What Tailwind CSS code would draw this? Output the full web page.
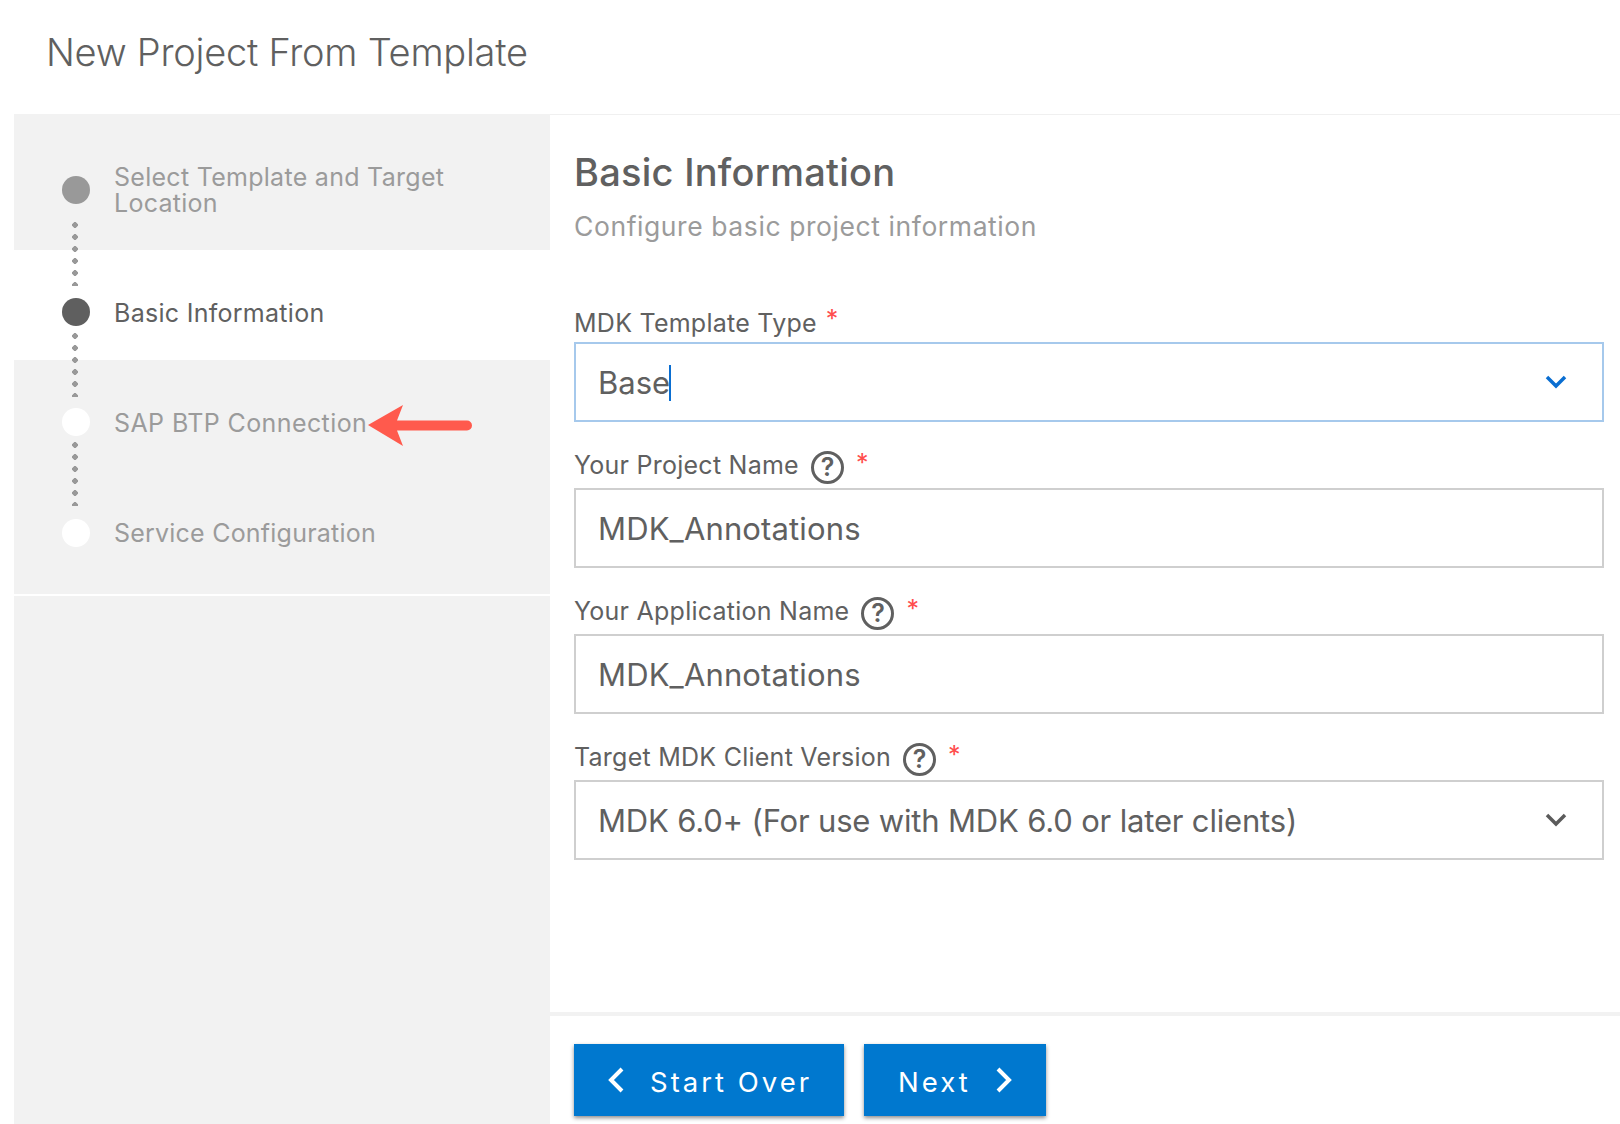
<!DOCTYPE html>
<html lang="en">
  <head>
    <meta charset="UTF-8" />
    <title>New Project From Template</title>
    <script src="https://cdn.jsdelivr.net/npm/@tailwindcss/browser@4"></script>
  </head>
  <body class="bg-white font-['Inter',sans-serif] text-[#606060] w-[1620px] h-[1124px] overflow-hidden">
    <!-- Header -->
    <header class="h-[114px] pl-[46px] pt-[27px]">
      <h1 class="text-[38px] leading-[50px] font-light tracking-[-0.25px]">New Project From Template</h1>
    </header>

    <div class="flex h-[1010px] pl-[14px]">
      <!-- Stepper -->
      <aside class="w-[536px] shrink-0 flex flex-col bg-[#f2f2f2] text-[25px] tracking-[0.28px]">
        <div class="relative h-[136px] pl-[48px] pt-[48px] flex gap-[24px] text-[#9b9b9b]">
          <span class="w-[28px] h-[28px] mt-[14px] rounded-full bg-[#999999] shrink-0"></span>
          <span class="leading-[26px] pt-[2px]">Select Template and Target<br />Location</span>
          <span class="absolute z-10 left-[58px] top-[108px] w-[6px] h-[64px] bg-[radial-gradient(circle_at_3px_3px,#999999_2.6px,transparent_3px)] bg-[length:6px_12px]"></span>
        </div>
        <div class="relative h-[110px] bg-white pl-[48px] pt-[48px] flex gap-[24px]">
          <span class="w-[28px] h-[28px] rounded-full bg-[#5f5f5f] shrink-0"></span>
          <span class="leading-[28px] pt-[1px]">Basic Information</span>
          <span class="absolute z-10 left-[58px] top-[83px] w-[6px] h-[64px] bg-[radial-gradient(circle_at_3px_3px,#999999_2.6px,transparent_3px)] bg-[length:6px_12px]"></span>
        </div>
        <div class="relative h-[234px] pl-[48px] pt-[48px] text-[#9b9b9b]">
          <div class="flex gap-[24px]">
            <span class="w-[28px] h-[28px] rounded-full bg-white shrink-0"></span>
            <span class="leading-[28px] pt-[1px] tracking-[0.4px]">SAP BTP Connection</span>
          </div>
          <div class="flex gap-[24px] mt-[82px]">
            <span class="w-[28px] h-[28px] rounded-full bg-white shrink-0"></span>
            <span class="leading-[28px] tracking-[0.22px]">Service Configuration</span>
          </div>
          <span class="absolute z-10 left-[58px] top-[82px] w-[6px] h-[64px] bg-[radial-gradient(circle_at_3px_3px,#999999_2.6px,transparent_3px)] bg-[length:6px_12px]"></span>
          <!-- Annotation arrow -->
          <svg class="absolute left-[354px] top-[45px]" width="110" height="44" viewBox="0 0 110 44">
            <path d="M0 20 L35 0 L29 15.5 L99 15.5 A5 5 0 0 1 99 25.5 L29 25.5 L35 41 Z" fill="#ff5a4d" />
          </svg>
        </div>
        <div class="h-[2px] bg-white"></div>
      </aside>

      <!-- Main -->
      <main class="flex-1 flex flex-col border-t border-[#f0f0f0]">
        <div class="h-[897px] pl-[24px] pr-[16px] pt-[32px]">
          <h2 class="text-[38px] leading-[50px] font-medium tracking-[0.25px]">Basic Information</h2>
          <p class="mt-[11px] text-[26.5px] leading-[36px] tracking-[0.58px] text-[#9b9b9b]">Configure basic project information</p>

          <form class="mt-[62px] text-[25px] tracking-[0.25px]">
            <label class="flex items-center h-[33px] mb-[3px]">
              <span class="translate-y-[1px]">MDK Template Type</span>
              <span class="ml-[9px] text-[#ff4d4d] -translate-y-[3px]">*</span>
            </label>
            <div class="h-[80px] border-2 border-[#a6c9ec] flex items-center pl-[22px] pr-[34px] pt-[2px] text-[31px] tracking-normal">
              <span>Base</span><span class="w-[2px] h-[36px] bg-[#0a6ed1] -ml-[1px]"></span>
              <svg class="ml-auto -translate-y-[1px]" width="24" height="14" viewBox="0 0 24 14" fill="none" stroke="#0a6ed1" stroke-width="3.5"><path d="M3 2 L12 11 L21 2" /></svg>
            </div>

            <label class="flex items-center h-[33px] mt-[28px] mb-[5px]">
              <span class="-translate-y-[1px]">Your Project Name</span>
              <span class="ml-[12px] w-[33px] h-[33px] translate-y-[1px] rounded-full border-[3px] border-[#606060] flex items-center justify-center text-[25px] font-semibold tracking-normal">?</span>
              <span class="ml-[12px] text-[#ff4d4d] -translate-y-[3px]">*</span>
            </label>
            <div class="h-[80px] border-2 border-[#cfcfcf] flex items-center pl-[22px] pt-[2px] text-[31px] tracking-[0.14px]">MDK_Annotations</div>

            <label class="flex items-center h-[33px] mt-[28px] mb-[5px]">
              <span class="-translate-y-[1px]">Your Application Name</span>
              <span class="ml-[12px] w-[33px] h-[33px] translate-y-[1px] rounded-full border-[3px] border-[#606060] flex items-center justify-center text-[25px] font-semibold tracking-normal">?</span>
              <span class="ml-[12px] text-[#ff4d4d] -translate-y-[3px]">*</span>
            </label>
            <div class="h-[80px] border-2 border-[#cfcfcf] flex items-center pl-[22px] pt-[2px] text-[31px] tracking-[0.14px]">MDK_Annotations</div>

            <label class="flex items-center h-[33px] mt-[28px] mb-[5px]">
              <span class="-translate-y-[1px]">Target MDK Client Version</span>
              <span class="ml-[12px] w-[33px] h-[33px] translate-y-[1px] rounded-full border-[3px] border-[#606060] flex items-center justify-center text-[25px] font-semibold tracking-normal">?</span>
              <span class="ml-[12px] text-[#ff4d4d] -translate-y-[3px]">*</span>
            </label>
            <div class="h-[80px] border-2 border-[#cfcfcf] flex items-center pl-[22px] pr-[34px] pt-[2px] text-[31px] tracking-[-0.17px]">
              <span>MDK 6.0+ (For use with MDK 6.0 or later clients)</span>
              <svg class="ml-auto -translate-y-[1px]" width="24" height="14" viewBox="0 0 24 14" fill="none" stroke="#5b5b5b" stroke-width="3.5"><path d="M3 2 L12 11 L21 2" /></svg>
            </div>
          </form>
        </div>

        <!-- Footer -->
        <footer class="border-t-4 border-[#f2f2f2] pl-[24px] pt-[28px] flex gap-[20px]">
          <button class="w-[270px] h-[72px] bg-[#0078cf] text-white text-[27.5px] tracking-[3px] flex items-center pl-[33px] shadow-[0_2px_4px_rgba(0,0,0,0.45)]">
            <svg class="mr-[25px]" width="18" height="28" viewBox="0 0 18 28" fill="none" stroke="white" stroke-width="4"><path d="M15 3 L4 14 L15 25" /></svg>
            <span class="pt-[5px]">Start Over</span>
          </button>
          <button class="w-[182px] h-[72px] bg-[#0078cf] text-white text-[27.5px] tracking-[3px] flex items-center pl-[34px] shadow-[0_2px_4px_rgba(0,0,0,0.45)]">
            <span class="pt-[5px]">Next</span>
            <svg class="ml-[24px]" width="18" height="28" viewBox="0 0 18 28" fill="none" stroke="white" stroke-width="4"><path d="M3 3 L14 14 L3 25" /></svg>
          </button>
        </footer>
      </main>
    </div>
  </body>
</html>
